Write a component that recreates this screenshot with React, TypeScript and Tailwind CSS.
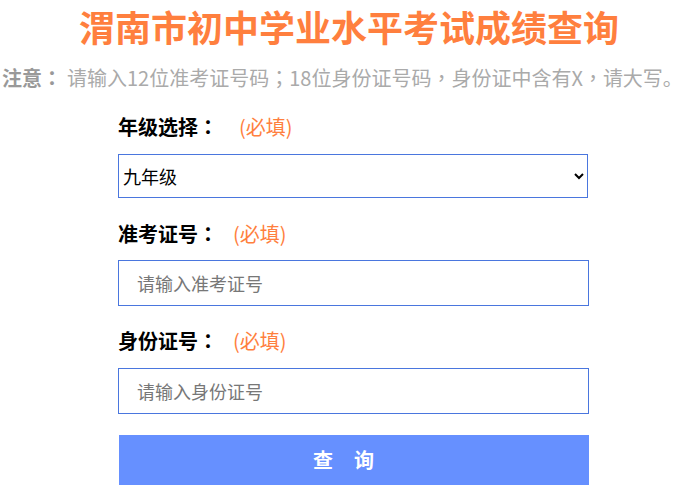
import React from "react";

const P = ({ children }: { children: React.ReactNode }) => (
  <span style={{ fontFamily: '"Noto Sans CJK TC", "Noto Sans CJK SC", sans-serif' }}>{children}</span>
);

export default function App() {
  const font = { fontFamily: '"Noto Sans CJK SC", "Noto Sans", sans-serif' };
  return (
    <div className="w-[682px] h-[492px] bg-white overflow-hidden [text-spacing-trim:space-all]" style={font}>
      <h1 className="pl-[16px] text-center text-[36px] font-bold leading-[52px] text-[#ff7f3e]">
        渭南市初中学业水平考试成绩查询
      </h1>
      <p className="mt-[11px] pl-[2px] text-center text-[20px] leading-[30px] text-[#aaaaaa] whitespace-nowrap">
        <span className="mr-[5px] font-bold text-[#999999]">
          注意<P>：</P>
        </span>
        请输入12位准考证号码<P>；</P>18位身份证号码<P>，</P>身份证中含有X<P>，</P>请大写。
      </p>
      <div className="ml-[118px] w-[471px] flex flex-col">
        <div className="mt-[19px] flex items-center h-[30px] text-[20px] leading-[30px]">
          <span className="font-bold text-black">
            年级选择<P>：</P>
          </span>
          <span className="ml-[21px] text-[#ff7f3e]">(必填)</span>
        </div>
        <select
          defaultValue="九年级"
          className="mt-[12px] w-[470px] h-[44px] border border-[#4a76de] bg-white text-[18px] text-black pl-0 outline-none"
        >
          <option>七年级</option>
          <option>八年级</option>
          <option>九年级</option>
        </select>
        <div className="mt-[21px] flex items-center h-[30px] text-[20px] leading-[30px]">
          <span className="font-bold text-black">
            准考证号<P>：</P>
          </span>
          <span className="ml-[15px] text-[#ff7f3e]">(必填)</span>
        </div>
        <input
          placeholder="请输入准考证号"
          className="mt-[11px] w-[471px] h-[46px] border border-[#4a76de] px-[18px] text-[18px] text-black placeholder:text-[#777777] outline-none"
        />
        <div className="mt-[20px] flex items-center h-[30px] text-[20px] leading-[30px]">
          <span className="font-bold text-black">
            身份证号<P>：</P>
          </span>
          <span className="ml-[15px] text-[#ff7f3e]">(必填)</span>
        </div>
        <input
          placeholder="请输入身份证号"
          className="mt-[12px] w-[471px] h-[46px] border border-[#4a76de] px-[18px] text-[18px] text-black placeholder:text-[#777777] outline-none"
        />
        <button className="mt-[21px] ml-[1px] w-[470px] h-[50px] bg-[#6690ff] text-white text-[20px] font-bold tracking-[21px]">
          查询
        </button>
      </div>
    </div>
  );
}
